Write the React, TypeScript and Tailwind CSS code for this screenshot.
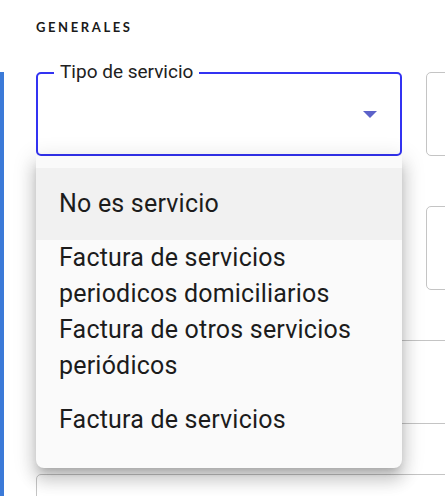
const opciones = [
  { label: 'No es servicio', pad: 'py-[18px]', active: true },
  { label: 'Factura de servicios periodicos domiciliarios', pad: 'py-0' },
  { label: 'Factura de otros servicios periódicos', pad: 'py-0' },
  { label: 'Factura de servicios', pad: 'py-[18px]' },
];

function CampoVacio({ className = '' }: { className?: string }) {
  return <div className={`h-[84px] rounded-[5px] border border-[#c4c4c4] bg-white ${className}`} />;
}

function SelectTipo() {
  return (
    <div className="relative z-10">
      <div className="relative flex h-[84px] items-center justify-end rounded-[5px] border-2 border-[#3333f2] bg-white pr-[23px]">
        <span className="absolute left-[16px] top-[-12px] bg-white px-[6px] text-[19px] leading-[20px] text-[#212121]">
          Tipo de servicio
        </span>
        <svg width="14" height="7" viewBox="0 0 14 7" className="text-[#5c62c9]">
          <path d="M0 0h14L7 7z" fill="currentColor" />
        </svg>
      </div>
      <ul className="absolute left-0 top-full w-full rounded-b-[8px] bg-[#fafafa] pb-[12px] pt-[12px] shadow-[0px_6px_8px_-4px_rgba(0,0,0,0.2),0px_12px_16px_2px_rgba(0,0,0,0.14),0px_4px_22px_3px_rgba(0,0,0,0.12)]">
        {opciones.map((o) => (
          <li
            key={o.label}
            className={`px-[23px] text-[25px] leading-[36px] tracking-[0.2px] text-[#1c1c1c] ${o.pad} ${o.active ? 'bg-[#f1f1f1]' : ''}`}
          >
            {o.label}
          </li>
        ))}
      </ul>
    </div>
  );
}

export default function App() {
  return (
    <div className="h-[496px] w-[445px] overflow-hidden bg-white font-['Roboto',sans-serif]">
      <h2 className="pl-[36px] pt-[19px] font-['Lato',sans-serif] text-[13px] font-bold leading-[16px] tracking-[2.6px] text-[#1a1a1a]">
        GENERALES
      </h2>
      <section className="mt-[37px] border-l-4 border-[#3b7ad8] pl-[32px]">
        <div className="grid w-[756px] grid-cols-[366px_366px] gap-x-[24px] gap-y-[50px]">
          <SelectTipo />
          <CampoVacio />
          <CampoVacio />
          <CampoVacio />
          <CampoVacio className="col-span-2" />
          <CampoVacio className="col-span-2" />
        </div>
      </section>
    </div>
  );
}
